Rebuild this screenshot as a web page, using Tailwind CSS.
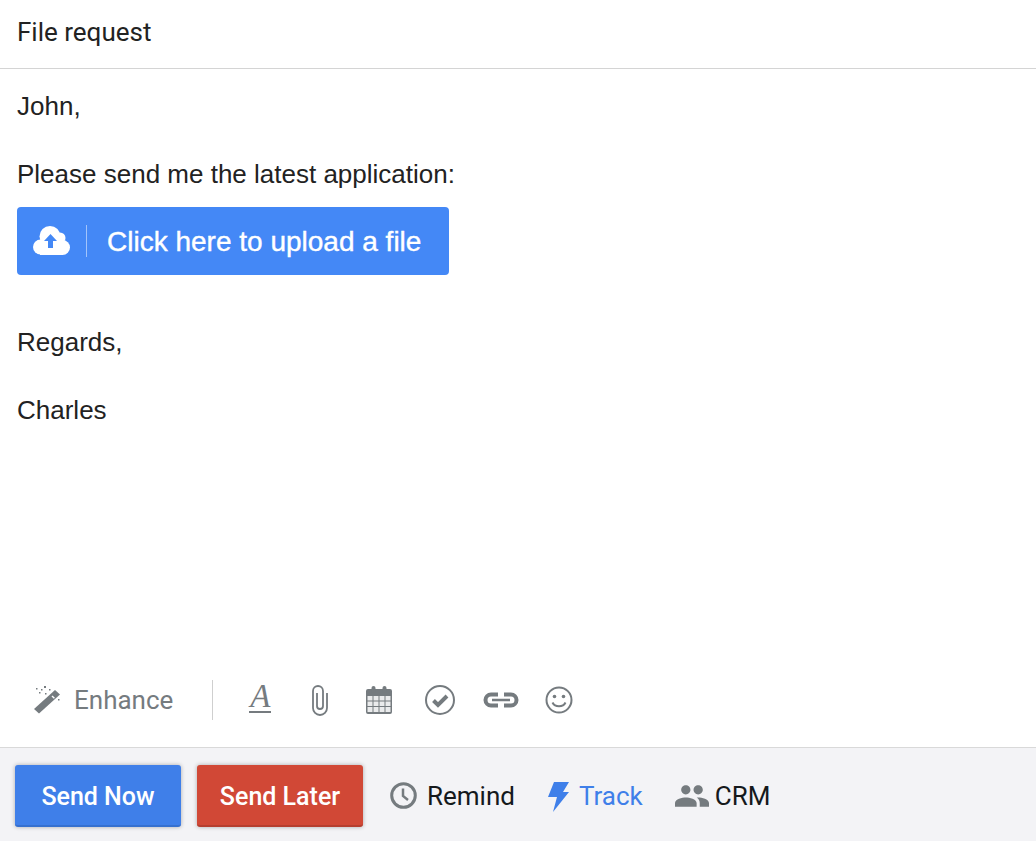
<!DOCTYPE html>
<html lang="en">

<head>
  <meta charset="UTF-8" />
  <title>File request</title>
  <script src="https://cdn.jsdelivr.net/npm/@tailwindcss/browser@4"></script>
</head>

<body class="bg-white h-[841px] w-[1036px] overflow-hidden flex flex-col font-['Roboto',sans-serif]">

  <!-- Subject -->
  <header class="h-[69px] border-b border-[#d4d4d4] px-[17px] flex items-center text-[26px] text-[#222] pb-[3px]">File request</header>

  <!-- Body -->
  <main class="flex-1 px-[17px] pt-[20px] font-['Liberation_Sans',sans-serif] text-[26px] leading-[34px] text-[#222]">
    <p>John,</p>
    <p class="mt-[34px]">Please send me the latest application:</p>
    <a class="mt-[16px] w-[432px] h-[68px] rounded-[4px] bg-[#4488f6] text-white flex items-center">
      <svg class="ml-[16px] mb-[2px] w-[37px] h-[29px] shrink-0" viewBox="0 0 37 29">
        <g fill="#fff">
          <circle cx="7.5" cy="21" r="7.5" />
          <circle cx="17" cy="10.5" r="10.5" />
          <circle cx="27" cy="12" r="5.5" />
          <circle cx="29.5" cy="21.5" r="7.5" />
          <rect x="7" y="16" width="23" height="13" />
        </g>
        <path fill="#4488f6" d="M17.5 8l6.500 7h-4v7h-5v-7h-4z" />
      </svg>
      <span class="ml-[16px] h-[32px] w-px bg-white/50"></span>
      <span class="ml-[20px] pt-[2px] text-[28px] [-webkit-text-stroke:0.4px_white]">Click here to upload a file</span>
    </a>
    <p class="mt-[50px]">Regards,</p>
    <p class="mt-[34px]">Charles</p>
  </main>

  <!-- Toolbar -->
  <div class="h-[78px] pb-[16px] flex items-center text-[#757b7f]">
    <svg class="ml-[33px] w-[28px] h-[28px] shrink-0" viewBox="0 0 28 28">
      <path fill="#757b7f" d="M22 4l5 4.500L6 27.500 1 23z" />
      <path fill="#fff" d="M18.500 10.500l1-.9 2.400 2.200-1 .9z" />
      <path fill="#757b7f" d="M3 2h1.500v1.500H3zM8 3h1.500v1.500H8zM11 0h2v2h-2zM6 6h1.500v1.500H6zM16 3h1.500v1.500H16zM12 7h1.500v1.500H12zM25 13h1.500v1.500H25z" />
    </svg>
    <span class="ml-[13px] text-[26px]">Enhance</span>
    <span class="ml-[39px] h-[40px] w-px bg-[#cfcfcf]"></span>
    <div class="ml-[36px] w-[22px] h-[40px] flex flex-col items-center shrink-0">
      <span class="font-['Liberation_Serif',serif] italic text-[33px] leading-[32px] h-[28px]">A</span>
      <span class="mt-[3px] w-[22px] h-[2px] bg-[#757b7f]"></span>
    </div>
    <svg class="ml-[41px] w-[16px] h-[32px] shrink-0" viewBox="0 0 16 32" fill="none" stroke="#757b7f" stroke-width="1.8">
      <path d="M15 9v15a7 7 0 0 1-14 0V7a5 5 0 0 1 10 0v15a3 3 0 0 1-6 0V9" />
    </svg>
    <svg class="ml-[38px] w-[26px] h-[28px] shrink-0" viewBox="0 0 26 28">
      <path fill="#757b7f" d="M2 3h4v3h3V3h8v3h3V3h4a2 2 0 0 1 2 2v21a2 2 0 0 1-2 2H2a2 2 0 0 1-2-2V5a2 2 0 0 1 2-2z" />
      <rect x="5.500" y="0" width="4" height="7" rx="2" fill="#757b7f" />
      <rect x="16.500" y="0" width="4" height="7" rx="2" fill="#757b7f" />
      <path fill="#fff" fill-opacity="0.85" d="M1.500 10h5v4.500h-5zM7.500 10h5v4.500h-5zM13.500 10h5v4.500h-5zM19.500 10h5v4.500h-5zM1.500 15.500h5V20h-5zM7.500 15.500h5V20h-5zM13.500 15.500h5V20h-5zM19.500 15.500h5V20h-5zM1.500 21h5v5h-5zM7.500 21h5v5h-5zM13.500 21h5v5h-5zM19.500 21h5v5h-5z" />
    </svg>
    <svg class="ml-[33px] w-[30px] h-[30px] shrink-0" viewBox="0 0 30 30" fill="none" stroke="#757b7f">
      <circle cx="15" cy="15" r="14" stroke-width="2" />
      <path d="M8.500 15.500l4.500 4.500 9-9" stroke-width="4" />
    </svg>
    <svg class="ml-[28px] w-[36px] h-[16px] shrink-0" viewBox="0 0 36 16" fill="none" stroke="#757b7f">
      <path d="M15 2.500H8a5.500 5.500 0 0 0 0 11h7M21 2.500h7a5.500 5.500 0 0 1 0 11h-7" stroke-width="4" />
      <path d="M9 8h18" stroke-width="2.500" />
    </svg>
    <svg class="ml-[26px] w-[28px] h-[28px] shrink-0" viewBox="0 0 28 28" fill="none" stroke="#757b7f">
      <circle cx="14" cy="14" r="12.500" stroke-width="2" />
      <circle cx="9.500" cy="10.500" r="1.800" fill="#757b7f" stroke="none" />
      <circle cx="18.500" cy="10.500" r="1.800" fill="#757b7f" stroke="none" />
      <path d="M7.500 16.500c2.500 5 10.500 5 13 0" stroke-width="2" />
    </svg>
  </div>

  <!-- Footer -->
  <footer class="h-[94px] bg-[#f3f3f6] border-t border-[#d9d9d9] flex items-center pl-[15px] pt-[2px] text-[26px]">
    <button class="w-[166px] h-[62px] pt-[4px] rounded-[3px] bg-[#3f7fe9] border-b-2 border-[#3670cf] text-white text-[25px] font-medium shadow-[0_0_4px_rgba(0,0,0,0.3)]">Send Now</button>
    <button class="ml-[16px] w-[166px] h-[62px] pt-[4px] rounded-[3px] bg-[#d14836] border-b-2 border-[#b53e2f] text-white text-[25px] font-medium shadow-[0_0_4px_rgba(0,0,0,0.3)]">Send Later</button>
    <svg class="ml-[27px] w-[27px] h-[27px] shrink-0" viewBox="0 0 27 27" fill="none" stroke="#757b7f">
      <circle cx="13.500" cy="13.500" r="11.800" stroke-width="3" />
      <path d="M13 6.500v7.500l5 4" stroke-width="2.500" />
    </svg>
    <span class="ml-[10px] mt-[2px] text-[#15191c]">Remind</span>
    <svg class="ml-[33px] w-[21px] h-[30px] mt-[2px] shrink-0" viewBox="0 0 21 30">
      <path fill="#3f7fe9" d="M6 0h15l-6 10h6L5 30l4-15H0z" />
    </svg>
    <span class="ml-[10px] mt-[2px] text-[#3f7fe9]">Track</span>
    <svg class="ml-[32px] w-[34px] h-[22px] shrink-0" viewBox="1 5 22 14" fill="#757b7f">
      <path d="M16 11c1.660 0 2.990-1.340 2.990-3S17.660 5 16 5c-1.660 0-3 1.340-3 3s1.340 3 3 3zm-8 0c1.660 0 2.990-1.340 2.990-3S9.660 5 8 5C6.340 5 5 6.340 5 8s1.340 3 3 3zm0 2c-2.330 0-7 1.170-7 3.500V19h14v-2.500c0-2.330-4.670-3.500-7-3.500zm8 0c-.29 0-.62.02-.97.05 1.160.84 1.970 1.970 1.970 3.450V19h6v-2.500c0-2.330-4.670-3.500-7-3.500z" />
    </svg>
    <span class="ml-[6px] mt-[2px] text-[#15191c]">CRM</span>
  </footer>

</body>

</html>
